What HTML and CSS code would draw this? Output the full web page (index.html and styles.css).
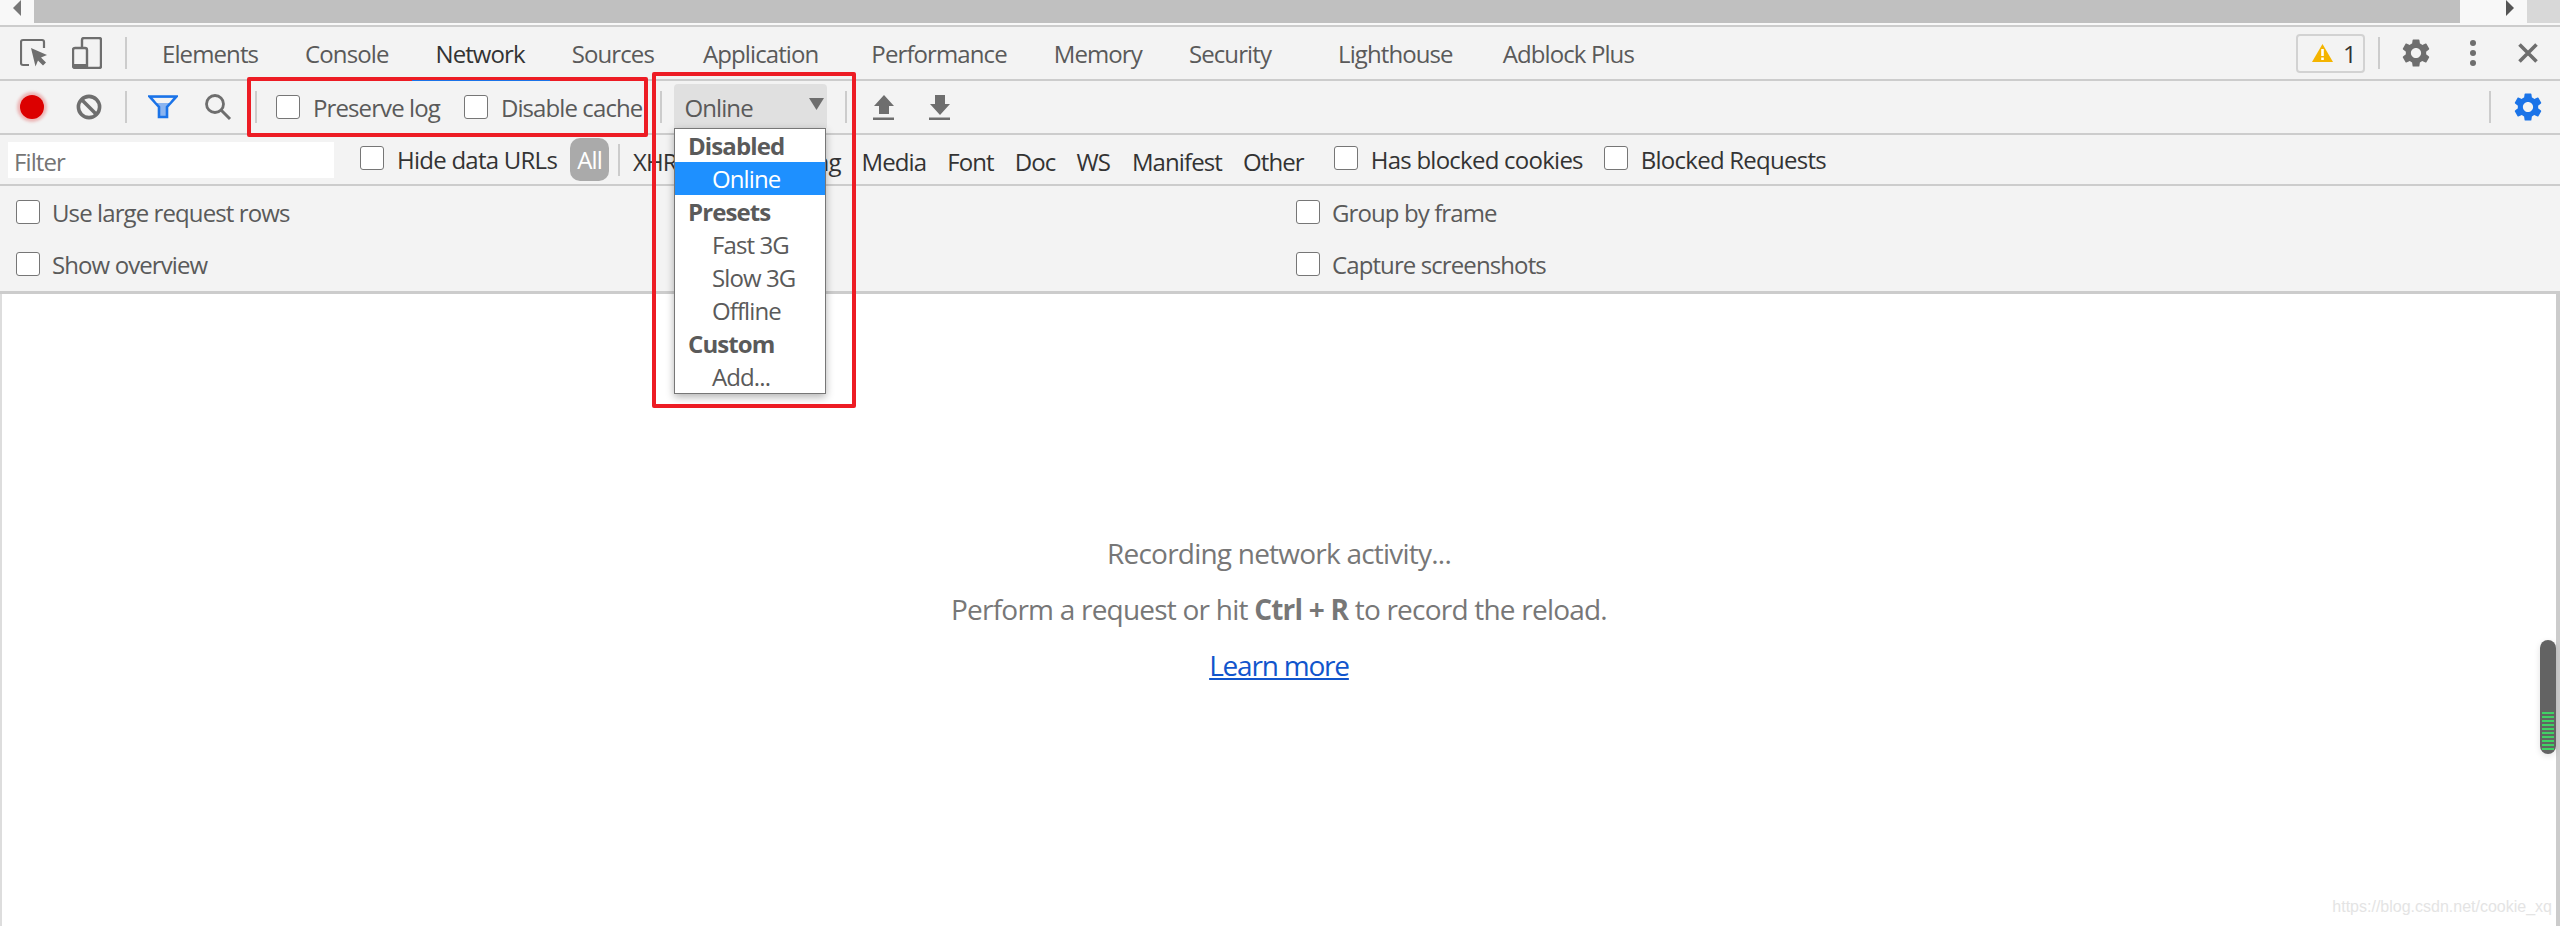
FILE: index.html
```html
<!DOCTYPE html>
<html lang="en">
<head>
  <meta charset="UTF-8" />
  <title>DevTools - Network</title>
  <link rel="stylesheet" href="styles.css">
</head>
<body>

  <div class="page-scroll">
    <div class="page-scroll-btn">
      <svg width="8" height="16" viewBox="0 0 8 16"><path d="M8 0v16L0 8z" fill="#777"/></svg>
    </div>
    <div class="page-scroll-thumb"></div>
    <div class="page-scroll-btn right">
      <svg width="8" height="16" viewBox="0 0 8 16"><path d="M0 0v16l8-8z" fill="#555"/></svg>
    </div>
    <div class="page-scroll-end"></div>
  </div>

  <!-- main tabs -->
  <nav class="tabs">
    <svg class="icon inspect" width="28" height="30" viewBox="0 0 28 30">
      <path d="M9 27H3a2 2 0 0 1-2-2V4a2 2 0 0 1 2-2h19a2 2 0 0 1 2 2v6" fill="none" stroke="#6e6e6e" stroke-width="2.2"/>
      <path d="M11 10l16 7-6 2.500 5 5-3 3-5-5-2.500 6z" fill="#6e6e6e"/>
    </svg>
    <svg class="icon device" width="30" height="32" viewBox="0 0 30 32">
      <path d="M10 11V3a2 2 0 0 1 2-2h15a2 2 0 0 1 2 2v26a2 2 0 0 1-2 2H3a2 2 0 0 1-2-2V13a2 2 0 0 1 2-2h10a2 2 0 0 1 2 2v18" fill="none" stroke="#6e6e6e" stroke-width="2.4"/>
      <path d="M1 27h14v4H1z" fill="#6e6e6e"/>
    </svg>
    <span class="sep tab-sep"></span>
    <a class="tab first">Elements</a>
    <a class="tab">Console</a>
    <a class="tab active">Network</a>
    <a class="tab">Sources</a>
    <a class="tab app">Application</a>
    <a class="tab perf">Performance</a>
    <a class="tab">Memory</a>
    <a class="tab">Security</a>
    <a class="tab wide">Lighthouse</a>
    <a class="tab adblock">Adblock Plus</a>
    <div class="tabs-right">
      <div class="warn-pill">
        <svg width="21" height="18" viewBox="0 0 21 18">
          <path d="M10.5 0L21 18H0z" fill="#f4b400"/>
          <path d="M9.2 5h2.6v7H9.2zM9.2 13.5h2.6V16H9.2z" fill="#fff"/>
        </svg>
        <span>1</span>
      </div>
      <span class="sep"></span>
      <svg class="gear" width="34" height="34" viewBox="0 0 24 24"><path fill="#6e6e6e" d="M19.14 12.94c.04-.3.06-.61.06-.94 0-.32-.02-.64-.07-.94l2.03-1.58a.49.49 0 0 0 .12-.61l-1.92-3.32a.488.488 0 0 0-.59-.22l-2.39.96c-.5-.38-1.03-.7-1.62-.94l-.36-2.54a.484.484 0 0 0-.48-.41h-3.84c-.24 0-.43.17-.47.41l-.36 2.54c-.59.24-1.13.57-1.62.94l-2.39-.96c-.22-.08-.47 0-.59.22L2.74 8.87c-.12.21-.08.47.12.61l2.03 1.58c-.05.3-.09.63-.09.94s.02.64.07.94l-2.03 1.58a.49.49 0 0 0-.12.61l1.92 3.32c.12.22.37.29.59.22l2.39-.96c.5.38 1.03.7 1.62.94l.36 2.54c.05.24.24.41.48.41h3.84c.24 0 .44-.17.47-.41l.36-2.54c.59-.24 1.13-.56 1.62-.94l2.39.96c.22.08.47 0 .59-.22l1.92-3.32c.12-.22.07-.47-.12-.61l-2.01-1.58zM12 15.6c-1.98 0-3.6-1.62-3.6-3.6s1.62-3.6 3.6-3.6 3.6 1.62 3.6 3.6-1.62 3.6-3.6 3.6z"/></svg>
      <svg class="dots" width="6" height="26" viewBox="0 0 6 26"><circle cx="3" cy="3" r="3" fill="#6e6e6e"/><circle cx="3" cy="13" r="3" fill="#6e6e6e"/><circle cx="3" cy="23" r="3" fill="#6e6e6e"/></svg>
      <svg class="close" width="20" height="20" viewBox="0 0 20 20"><path d="M1.5 1.5l17 17M18.5 1.5l-17 17" stroke="#6e6e6e" stroke-width="3.6"/></svg>
    </div>
  </nav>

  <!-- network toolbar -->
  <div class="toolbar">
    <span class="record"></span>
    <svg class="icon clear" width="26" height="26" viewBox="0 0 26 26">
      <circle cx="13" cy="13" r="10.6" fill="none" stroke="#6e6e6e" stroke-width="3.6"/>
      <path d="M5.5 5.5l15 15" stroke="#6e6e6e" stroke-width="3.6"/>
    </svg>
    <span class="sep clear-sep"></span>
    <svg class="icon filter" width="30" height="24" viewBox="0 0 30 24">
      <path d="M1.5 1.5h27L19 12v10h-8V12z" fill="#8ab4f0" stroke="#1a73e8" stroke-width="2.6"/>
      <path d="M5 3h20l-4 5H9z" fill="#f3f3f3"/>
    </svg>
    <svg class="icon search" width="28" height="28" viewBox="0 0 28 28">
      <circle cx="11" cy="11" r="8.5" fill="none" stroke="#6e6e6e" stroke-width="2.8"/>
      <path d="M17 17l9 9" stroke="#6e6e6e" stroke-width="3"/>
    </svg>
    <span class="sep search-sep"></span>
    <label class="check preserve"><input type="checkbox"><span>Preserve log</span></label>
    <label class="check cache"><input type="checkbox"><span>Disable cache</span></label>
    <span class="sep throttle-sep"></span>
    <div class="throttle">
      <span>Online</span>
      <svg width="15" height="12" viewBox="0 0 15 12"><path d="M0 0h15L7.500 12z" fill="#6e6e6e"/></svg>
    </div>
    <span class="sep har-sep"></span>
    <svg class="icon upload" width="22" height="25" viewBox="0 0 22 25"><path d="M11 0l10 11h-5v8H6v-8H1zM0 22.500h21V25H0z" fill="#6e6e6e"/></svg>
    <svg class="icon download" width="22" height="25" viewBox="0 0 22 25"><path d="M6 0h10v9h5L11 20 1 9h5zM0 22.500h21V25H0z" fill="#6e6e6e"/></svg>
    <div class="toolbar-right">
      <span class="sep"></span>
      <svg class="gear" width="34" height="34" viewBox="0 0 24 24"><path fill="#1a73e8" d="M19.14 12.94c.04-.3.06-.61.06-.94 0-.32-.02-.64-.07-.94l2.03-1.58a.49.49 0 0 0 .12-.61l-1.92-3.32a.488.488 0 0 0-.59-.22l-2.39.96c-.5-.38-1.03-.7-1.62-.94l-.36-2.54a.484.484 0 0 0-.48-.41h-3.84c-.24 0-.43.17-.47.41l-.36 2.54c-.59.24-1.13.57-1.62.94l-2.39-.96c-.22-.08-.47 0-.59.22L2.74 8.87c-.12.21-.08.47.12.61l2.03 1.58c-.05.3-.09.63-.09.94s.02.64.07.94l-2.03 1.58a.49.49 0 0 0-.12.61l1.92 3.32c.12.22.37.29.59.22l2.39-.96c.5.38 1.03.7 1.62.94l.36 2.54c.05.24.24.41.48.41h3.84c.24 0 .44-.17.47-.41l.36-2.54c.59-.24 1.13-.56 1.62-.94l2.39.96c.22.08.47 0 .59-.22l1.92-3.32c.12-.22.07-.47-.12-.61l-2.01-1.58zM12 15.6c-1.98 0-3.6-1.62-3.6-3.6s1.62-3.6 3.6-3.6 3.6 1.62 3.6 3.6-1.62 3.6-3.6 3.6z"/></svg>
    </div>
  </div>

  <!-- filter row -->
  <div class="filters">
    <div class="filter-input">Filter</div>
    <label class="check hide-urls"><input type="checkbox"><span>Hide data URLs</span></label>
    <span class="pill">All</span>
    <span class="sep pill-sep"></span>
    <span class="type">XHR</span>
    <span class="type">JS</span>
    <span class="type">CSS</span>
    <span class="type img">Img</span>
    <span class="type">Media</span>
    <span class="type">Font</span>
    <span class="type">Doc</span>
    <span class="type">WS</span>
    <span class="type manifest">Manifest</span>
    <span class="type">Other</span>
    <label class="check blocked-cookies"><input type="checkbox"><span>Has blocked cookies</span></label>
    <label class="check blocked-req"><input type="checkbox"><span>Blocked Requests</span></label>
  </div>

  <!-- network settings -->
  <div class="settings">
    <label class="check"><input type="checkbox"><span>Use large request rows</span></label>
    <label class="check"><input type="checkbox"><span>Group by frame</span></label>
    <label class="check"><input type="checkbox"><span>Show overview</span></label>
    <label class="check"><input type="checkbox"><span>Capture screenshots</span></label>
  </div>

  <main class="empty">
    <p>Recording network activity...</p>
    <p>Perform a request or hit <b>Ctrl + R</b> to record the reload.</p>
    <p><a href="#learn">Learn more</a></p>
    <span class="watermark">https://blog.csdn.net/cookie_xq</span>
  </main>
  <div class="bottom-line"></div>

  <!-- things over the page -->
  <div class="menu">
    <div class="menu-group">Disabled</div>
    <div class="menu-item selected">Online</div>
    <div class="menu-group">Presets</div>
    <div class="menu-item">Fast 3G</div>
    <div class="menu-item">Slow 3G</div>
    <div class="menu-item">Offline</div>
    <div class="menu-group">Custom</div>
    <div class="menu-item">Add...</div>
  </div>
  <div class="mark mark-cache"></div>
  <div class="mark mark-throttle"></div>
  <div class="float-bar">
    <div class="float-lines"></div>
  </div>
  <div class="tab-line"></div>

</body>
</html>
```

FILE: styles.css
```css
* {
  box-sizing: border-box;
}
html, body {
  height: 926px;
  overflow: hidden;
}
body {
  margin: 0;
  position: relative;
  background: #fff;
  font-family: "Open Sans", "Noto Sans", sans-serif;
  font-size: 24px;
  letter-spacing: -0.9px;
  color: #5a5a5a;
}
svg {
  display: block;
  flex: none;
}
.sep {
  display: block;
  flex: none;
  width: 2px;
  height: 32px;
  background: #ccc;
}

/* page scrollbar */
.page-scroll {
  display: flex;
  height: 27px;
  background: #f8f8f8;
  border-bottom: 2px solid #ccc;
}
.page-scroll-btn {
  width: 34px;
  padding-left: 13px;
}
.page-scroll-thumb {
  width: 2426px;
  height: 23px;
  background: #c0c0c0;
}
.page-scroll-btn.right {
  width: 67px;
  padding-left: 46px;
}
.page-scroll-end {
  flex: 1;
  height: 23px;
  background: #d8d8d8;
}

/* tabs */
.tabs {
  display: flex;
  align-items: center;
  height: 54px;
  padding-left: 20px;
  background: #f3f3f3;
  border-bottom: 2px solid #ccc;
}
.device {
  margin-left: 24px;
}
.tab-sep {
  margin-left: 23px;
}
.tab {
  margin-left: 47px;
  color: #5a5a5a;
}
.tab.first {
  margin-left: 35px;
}
.tab.active {
  color: #333;
}
.tab.app {
  margin-left: 49px;
}
.tab.perf {
  margin-left: 53px;
}
.tab.wide {
  margin-left: 67px;
}
.tab.adblock {
  margin-left: 50px;
}
.tabs-right {
  display: flex;
  align-items: center;
  margin-left: auto;
  padding-right: 22px;
}
.warn-pill {
  display: flex;
  align-items: center;
  gap: 10px;
  width: 69px;
  height: 39px;
  padding-left: 14px;
  border: 2px solid #d2d2d2;
  border-radius: 4px;
  color: #333;
}
.tabs-right .sep {
  margin-left: 13px;
}
.tabs-right .gear {
  margin-left: 19px;
}
.dots {
  margin-left: 37px;
}
.close {
  margin-left: 42px;
}

/* toolbar */
.toolbar {
  display: flex;
  align-items: center;
  height: 54px;
  padding-left: 20px;
  background: #f3f3f3;
  border-bottom: 2px solid #ccc;
}
.record {
  flex: none;
  width: 24px;
  height: 24px;
  border-radius: 50%;
  background: #dc0000;
  box-shadow: 0 0 3px 3px rgba(220, 0, 0, 0.25);
}
.clear {
  margin-left: 32px;
}
.clear-sep {
  margin-left: 23px;
}
.filter {
  margin-left: 21px;
}
.search {
  margin-left: 26px;
}
.search-sep {
  margin-left: 23px;
}
.check {
  display: flex;
  align-items: center;
  flex: none;
}
.check input {
  appearance: none;
  flex: none;
  width: 24px;
  height: 24px;
  margin: 0 13px 0 0;
  background: #fff;
  border: 1px solid #767676;
  border-radius: 3px;
}
.preserve {
  margin-left: 19px;
}
.cache {
  margin-left: 24px;
}
.throttle-sep {
  margin-left: 18px;
}
.throttle {
  display: flex;
  align-items: center;
  justify-content: space-between;
  width: 153px;
  height: 46px;
  margin-left: 12px;
  padding: 0 3px 0 10px;
  background: #e0e0e0;
  border-radius: 4px;
}
.throttle svg {
  margin-top: -6px;
}
.har-sep {
  margin-left: 18px;
}
.upload {
  margin-left: 26px;
}
.download {
  margin-left: 34px;
}
.toolbar-right {
  display: flex;
  align-items: center;
  margin-left: auto;
  padding-right: 15px;
}
.toolbar-right .gear {
  margin-left: 20px;
}

/* filter row */
.filters {
  display: flex;
  align-items: center;
  height: 51px;
  padding-left: 8px;
  background: #f3f3f3;
  border-bottom: 2px solid #ccc;
  color: #333;
}
.filter-input {
  flex: none;
  width: 326px;
  height: 36px;
  padding-left: 6px;
  background: #fff;
  color: #757575;
  line-height: 40px;
}
.filters .check span, .type {
  padding-top: 3px;
}
.filters .check {
  letter-spacing: -0.75px;
}
.hide-urls {
  margin-left: 26px;
  margin-top: -4px;
}
.pill {
  flex: none;
  width: 39px;
  height: 43px;
  margin-left: 13px;
  background: #aaa;
  border-radius: 10px;
  color: #fff;
  line-height: 43px;
  text-align: center;
}
.pill-sep {
  margin-left: 9px;
}
.type {
  margin-left: 21px;
}
.type:nth-of-type(3) {
  margin-left: 13px;
}
.type.img {
  margin-left: 26px;
}
.type.manifest {
  margin-left: 22px;
}
.blocked-cookies {
  margin-left: 30px;
  margin-top: -4px;
}
.blocked-req {
  margin-left: 21px;
  margin-top: -4px;
}

/* settings */
.settings {
  display: grid;
  grid-template-columns: 1280px 1fr;
  grid-auto-rows: 52px;
  height: 108px;
  padding: 0 0 0 16px;
  background: #f3f3f3;
  border-bottom: 3px solid #ccc;
}
.settings .check input {
  margin-right: 12px;
}

/* empty state */
.empty {
  position: relative;
  height: 632px;
  padding-top: 231px;
  border-left: 2px solid #ddd;
  border-right: 4px solid #ccc;
  color: #777;
  font-size: 28px;
  letter-spacing: -0.78px;
  text-align: center;
}
.empty p {
  height: 56px;
  margin: 0;
  line-height: 56px;
}
.empty a {
  color: #1155cc;
  letter-spacing: -1.2px;
}
.watermark {
  position: absolute;
  right: 4px;
  bottom: 10px;
  color: #e4e4e4;
  font-family: "Liberation Sans", sans-serif;
  font-size: 16px;
  letter-spacing: 0;
}
.bottom-line {
  height: 3px;
  background: #e6efdc;
}

/* overlays */
.menu {
  position: absolute;
  left: 674px;
  top: 128px;
  width: 152px;
  height: 266px;
  background: #fff;
  border: 1px solid #777;
  box-shadow: 0 3px 8px rgba(0, 0, 0, 0.3);
}
.menu-group, .menu-item {
  height: 33px;
  line-height: 33px;
}
.menu-group {
  padding-left: 13px;
  font-weight: 700;
}
.menu-item {
  padding-left: 37px;
}
.menu-item.selected {
  background: #1e90ff;
  color: #fff;
}
.mark {
  position: absolute;
  border: 4px solid #ed1c24;
  border-radius: 2px;
}
.mark-cache {
  left: 247px;
  top: 77px;
  width: 401px;
  height: 60px;
}
.mark-throttle {
  left: 652px;
  top: 72px;
  width: 204px;
  height: 336px;
}
.tab-line {
  position: absolute;
  left: 412px;
  top: 80px;
  width: 138px;
  height: 1px;
  background: #1a73e8;
}
.float-bar {
  position: absolute;
  left: 2540px;
  top: 640px;
  width: 16px;
  height: 114px;
  background: #636363;
  border-radius: 8px;
  box-shadow: 0 2px 6px rgba(0, 0, 0, 0.12);
}
.float-lines {
  position: absolute;
  left: 2px;
  top: 72px;
  width: 12px;
  height: 38px;
  background: repeating-linear-gradient(#3fd263 0 2px, #636363 2px 4px);
}
```
